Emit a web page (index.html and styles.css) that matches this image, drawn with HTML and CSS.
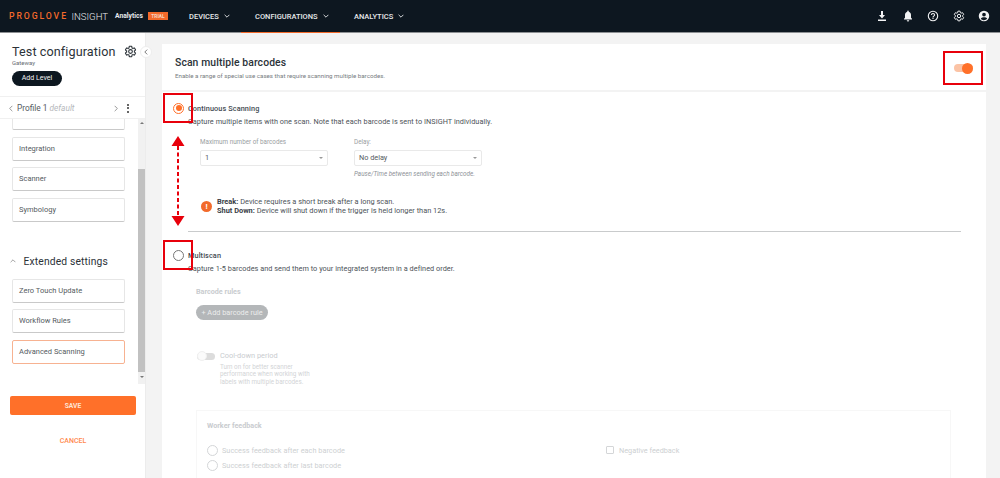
FILE: index.html
```html
<!DOCTYPE html>
<html lang="en">
<head>
<meta charset="utf-8">
<title>Scan multiple barcodes</title>
<link rel="stylesheet" href="styles.css">
</head>
<body>
<header class="topbar">
  <div class="brand"><span class="brand-pro">PROGLOVE</span><span class="brand-insight">INSIGHT</span><span class="brand-an">Analytics</span><span class="brand-trial">TRIAL</span></div>
  <nav class="nav">
    <span class="nav-item nav-devices">DEVICES <svg class="chev" viewBox="0 0 10 6"><path d="M1 1l4 4 4-4"/></svg></span>
    <span class="nav-item nav-config">CONFIGURATIONS <svg class="chev" viewBox="0 0 10 6"><path d="M1 1l4 4 4-4"/></svg></span>
    <span class="nav-item">ANALYTICS <svg class="chev" viewBox="0 0 10 6"><path d="M1 1l4 4 4-4"/></svg></span>
  </nav>
  <div class="top-icons">
    <svg class="ti" viewBox="0 0 24 24"><path d="M4 19h16v3H4zM10 2h4v8h4l-6 7-6-7h4z"/></svg>
    <svg class="ti" viewBox="0 0 24 24"><path d="M12 23a2.500 2.500 0 0 0 2.500-2.500h-5A2.500 2.500 0 0 0 12 23zm8-4v-1.500l-2-2V10c0-3.200-1.700-5.700-4.500-6.400V2.500a1.500 1.500 0 0 0-3 0v1.100C7.700 4.300 6 6.800 6 10v5.500l-2 2V19z"/></svg>
    <svg class="ti" viewBox="0 0 24 24"><path fill-rule="evenodd" d="M12 1.500a10.500 10.500 0 1 0 0 21 10.500 10.500 0 0 0 0-21zm0 18.800a8.300 8.300 0 1 1 0-16.600 8.300 8.300 0 0 1 0 16.600zM10.900 16h2.200v2.200h-2.200zM12 5.800a4.200 4.200 0 0 0-4.200 4.200H10a2 2 0 1 1 4 0c0 2-3.100 1.800-3.100 5h2.200c0-2.300 3.100-2.600 3.100-5A4.200 4.200 0 0 0 12 5.800z"/></svg>
    <svg class="ti ti-gear" viewBox="0 0 24 24"><path d="M19.140 12.940c.04-.3.06-.61.06-.94 0-.32-.02-.64-.07-.94l2.030-1.580c.18-.14.23-.41.12-.61l-1.920-3.320c-.12-.22-.37-.29-.59-.22l-2.390.96c-.5-.38-1.030-.7-1.620-.94l-.36-2.540c-.04-.24-.24-.41-.48-.41h-3.840c-.24 0-.43.17-.47.41l-.36 2.540c-.59.24-1.130.57-1.620.94l-2.390-.96c-.22-.08-.47 0-.59.22L2.740 8.870c-.12.21-.08.47.12.61l2.030 1.580c-.05.3-.09.63-.09.94s.02.64.07.94l-2.030 1.580c-.18.14-.23.41-.12.61l1.920 3.320c.12.22.37.29.59.22l2.390-.96c.5.38 1.030.7 1.620.94l.36 2.540c.05.24.24.41.48.41h3.840c.24 0 .44-.17.47-.41l.36-2.540c.59-.24 1.130-.56 1.620-.94l2.390.96c.22.08.47 0 .59-.22l1.920-3.320c.12-.22.07-.47-.12-.61z"/><circle cx="12" cy="12" r="3.400"/></svg>
    <svg class="ti" viewBox="0 0 24 24"><path fill-rule="evenodd" d="M12 1.500a10.500 10.500 0 1 0 0 21 10.500 10.500 0 0 0 0-21zm0 4a3.700 3.700 0 1 1 0 7.400 3.700 3.700 0 0 1 0-7.400zm0 15c-2.500 0-4.800-1.100-6.300-3 1-1.800 3.800-2.800 6.300-2.800s5.300 1 6.300 2.800a8.300 8.300 0 0 1-6.300 3z"/></svg>
  </div>
</header>
<div class="shell">
  <aside class="sidebar">
    <div class="side-head">
      <div class="title-row"><h1 class="cfg-title">Test configuration</h1>
        <svg class="cfg-gear" viewBox="0 0 24 24"><path d="M19.140 12.940c.04-.3.06-.61.06-.94 0-.32-.02-.64-.07-.94l2.030-1.580c.18-.14.23-.41.12-.61l-1.920-3.320c-.12-.22-.37-.29-.59-.22l-2.390.96c-.5-.38-1.030-.7-1.620-.94l-.36-2.540c-.04-.24-.24-.41-.48-.41h-3.840c-.24 0-.43.17-.47.41l-.36 2.540c-.59.24-1.130.57-1.620.94l-2.390-.96c-.22-.08-.47 0-.59.22L2.740 8.870c-.12.21-.08.47.12.61l2.030 1.580c-.05.3-.09.63-.09.94s.02.64.07.94l-2.030 1.580c-.18.14-.23.41-.12.61l1.920 3.320c.12.22.37.29.59.22l2.390-.96c.5.38 1.030.7 1.620.94l.36 2.540c.05.24.24.41.48.41h3.840c.24 0 .44-.17.47-.41l.36-2.540c.59-.24 1.130-.56 1.620-.94l2.390.96c.22.08.47 0 .59-.22l1.920-3.320c.12-.22.07-.47-.12-.61z"/><circle cx="12" cy="12" r="3.400"/></svg>
      </div>
      <div class="gateway">Gateway</div>
      <button class="add-level">Add Level</button>
    </div>
    <div class="profile-row">
      <svg class="pchev" viewBox="0 0 6 10"><path d="M5 1L1 5l4 4"/></svg>
      <span class="profile-name">Profile 1 <em>default</em></span>
      <svg class="pchev pnext" viewBox="0 0 6 10"><path d="M1 1l4 4-4 4"/></svg>
      <span class="dots"><i></i><i></i><i></i></span>
    </div>
    <div class="side-scroll">
      <div class="side-list">
        <div class="side-item side-first">Gateway</div>
        <div class="side-item">Integration</div>
        <div class="side-item">Scanner</div>
        <div class="side-item">Symbology</div>
        <div class="ext-head"><svg class="ext-chev" viewBox="0 0 10 6"><path d="M1 5l4-4 4 4"/></svg><span>Extended settings</span></div>
        <div class="side-item">Zero Touch Update</div>
        <div class="side-item">Workflow Rules</div>
        <div class="side-item side-active">Advanced Scanning</div>
      </div>
      <div class="scrollbar"><span class="sb-up"></span><span class="sb-thumb"></span><span class="sb-down"></span></div>
    </div>
    <button class="save">SAVE</button>
    <button class="cancel">CANCEL</button>
    <span class="collapse"><svg viewBox="0 0 6 10"><path d="M5 1L1 5l4 4"/></svg></span>
  </aside>
  <main class="main">
    <section class="card">
      <div class="card-head">
        <div>
          <h2 class="card-title">Scan multiple barcodes</h2>
          <p class="card-sub">Enable a range of special use cases that require scanning multiple barcodes.</p>
        </div>
        <span class="toggle"><i></i></span>
      </div>
      <div class="opt opt-cont">
        <div class="opt-row"><span class="radio radio-on"><i></i></span><span class="opt-title">Continuous Scanning</span></div>
        <p class="opt-desc">Capture multiple items with one scan. Note that each barcode is sent to INSIGHT individually.</p>
        <div class="fields">
          <div class="field"><label>Maximum number of barcodes</label><div class="select">1<b></b></div></div>
          <div class="field"><label>Delay:</label><div class="select">No delay<b></b></div><small>Pause/Time between sending each barcode.</small></div>
        </div>
        <div class="note">
          <span class="warn">!</span>
          <p><strong>Break:</strong> Device requires a short break after a long scan.<br><strong>Shut Down:</strong> Device will shut down if the trigger is held longer than 12s.</p>
        </div>
      </div>
      <div class="opt opt-multi">
        <div class="opt-row"><span class="radio"></span><span class="opt-title">Multiscan</span></div>
        <p class="opt-desc">Capture 1-5 barcodes and send them to your integrated system in a defined order.</p>
        <div class="disabled">
          <h3 class="dis-head dis-rules">Barcode rules</h3>
          <button class="add-rule">+ Add barcode rule</button>
          <div class="cool">
            <span class="cool-toggle"><i></i></span>
            <div><div class="cool-title">Cool-down period</div><p class="cool-text">Turn on for better scanner performance when working with labels with multiple barcodes.</p></div>
          </div>
          <div class="worker">
            <h3 class="dis-head">Worker feedback</h3>
            <div class="worker-grid">
              <div>
                <div class="fb"><span class="fb-radio"></span>Success feedback after each barcode</div>
                <div class="fb"><span class="fb-radio"></span>Success feedback after last barcode</div>
              </div>
              <div class="fb fb-neg"><span class="fb-check"></span>Negative feedback</div>
            </div>
          </div>
        </div>
      </div>
    </section>
  </main>
</div>
<span class="mark mark-toggle"></span>
<span class="mark mark-r1"></span>
<span class="mark mark-r2"></span>
<svg class="arrow" viewBox="0 0 14 90"><path class="arrow-tip" d="M7 0l6.500 10H.5zM7 90L.5 80h13z"/><path class="arrow-line" d="M7 10v70"/></svg>
</body>
</html>
```

FILE: styles.css
```css
* { box-sizing: border-box; }
html, body { margin: 0; height: 478px; overflow: hidden; }
body { font-family: Roboto, "Liberation Sans", sans-serif; color: #444b52; background: #f3f3f3; position: relative; }
button { font-family: inherit; border: 0; padding: 0; }
h1, h2, h3, p { margin: 0; font-weight: 400; }

.topbar { height: 33px; background: #0d1720; color: #e6e8ea; display: flex; align-items: center; padding: 0 10px 0 9px; border-bottom: 1px solid #8d9093; position: relative; }
.brand { display: flex; align-items: center; width: 180px; white-space: nowrap; }
.brand-pro { color: #f26a2b; font-size: 8.7px; font-weight: 500; letter-spacing: 1.9px; }
.brand-insight { font-size: 9.6px; font-weight: 300; margin-left: 3.5px; color: #e8eaec; }
.brand-an { font-size: 6.7px; font-weight: 700; margin-left: 7px; color: #e8eaec; }
.brand-trial { background: #f26a2b; color: #f5d5c4; font-size: 4.8px; font-weight: 700; padding: 1.5px 3px; margin-left: 5.5px; line-height: 5px; }
.nav { display: flex; font-size: 7.5px; font-weight: 500; white-space: nowrap; }
.nav-item { display: inline-flex; align-items: center; gap: 5px; }
.nav-devices { width: 66px; }
.nav-config { width: 99px; position: relative; }
.nav-config::after { content: ""; position: absolute; left: -14px; width: 99px; top: 20px; height: 1px; background: #f26a2b; }
.chev { width: 6px; height: 4px; fill: none; stroke: #e6e8ea; stroke-width: 1.5; }
.top-icons { margin-left: auto; display: flex; align-items: center; gap: 13.5px; }
.ti { width: 12px; height: 12px; fill: #f2f3f4; }
.ti-gear { fill: none; stroke: #f2f3f4; stroke-width: 2; }

.shell { display: flex; height: 445px; }
.sidebar { width: 146px; background: #fff; position: relative; flex: none; border-right: 1px solid #ececec; }
.side-head { padding: 10px 0 0 12px; height: 64px; border-bottom: 1px solid #f0f0f0; }
.title-row { display: flex; align-items: center; height: 16px; }
.cfg-title { font-size: 12.6px; font-weight: 400; color: #2b3238; white-space: nowrap; letter-spacing: .1px; }
.cfg-gear { width: 13px; height: 13px; margin-left: 8px; fill: none; stroke: #2b3238; stroke-width: 2; flex: none; }
.gateway { font-size: 6px; color: #666c72; line-height: 8px; }
.add-level { display: block; width: 50px; height: 15px; border-radius: 8px; background: #0d1720; color: #f2f3f4; font-size: 7px; margin-top: 3.5px; }
.profile-row { height: 22px; display: flex; align-items: center; padding: 1px 0 0 9px; font-size: 8.3px; color: #555b61; border-bottom: 1px solid #f0f0f0; }
.pchev { width: 4px; height: 7px; fill: none; stroke: #666; stroke-width: 1; }
.profile-name { margin-left: 4px; width: 97px; white-space: nowrap; }
.profile-name em { color: #b5b8bb; }
.pnext { flex: none; }
.dots { display: flex; flex-direction: column; gap: 1.5px; margin-left: 9px; }
.dots i { width: 2px; height: 2px; background: #333; border-radius: 50%; }
.side-scroll { display: flex; height: 266px; overflow: hidden; }
.side-list { flex: 1; padding: 0 13px 0 12px; }
.side-item { height: 24px; margin-bottom: 6.7px; background: #fff; border: 1px solid #e6e6e6; border-bottom: 1.5px solid #c9c9c9; border-radius: 2px; padding-left: 6px; font-size: 7.5px; line-height: 21.5px; color: #555b61; white-space: nowrap; }
.side-first { margin-top: -13px; line-height: 16px; }
.side-active { border-color: #f7b291; }
.ext-head { display: flex; align-items: center; height: 14px; margin: 32px 0 10.5px -2px; font-size: 10.3px; color: #2b3238; white-space: nowrap; letter-spacing: .15px; }
.ext-chev { width: 6px; height: 4px; fill: none; stroke: #666; stroke-width: 1; margin-right: 7.5px; }
.scrollbar { width: 8px; margin-right: -1px; display: flex; flex-direction: column; background: #f1f1f1; height: 265px; flex: none; }
.sb-up { height: 50px; position: relative; }
.sb-thumb { height: 203px; background: #c1c1c1; }
.sb-down { flex: 1; position: relative; }
.sb-up::after, .sb-down::after { content: ""; position: absolute; left: 2px; border: 2px solid transparent; }
.sb-up::after { top: 3px; border-bottom-color: #777; border-top: 0; }
.sb-down::after { top: 4px; border-top-color: #777; border-bottom: 0; }
.save { display: block; width: 126px; height: 19px; margin: 11px 0 0 10px; background: #ff7029; color: #fde3d6; border-radius: 2px; font-size: 6.7px; font-weight: 700; }
.cancel { display: block; width: 126px; margin: 21px 0 0 10px; background: none; color: #ff8a50; font-size: 7px; font-weight: 500; height: 10px; }
.collapse { position: absolute; top: 13px; left: 140px; width: 12px; height: 12px; border-radius: 50%; background: #fff; border: 1px solid #eee; display: flex; align-items: center; justify-content: center; }
.collapse svg { width: 4px; height: 6px; fill: none; stroke: #555; stroke-width: 1.3; }

.main { flex: 1; padding: 11px 14px 0 16px; overflow: hidden; }
.card { background: #fff; height: 500px; }
.card-head { height: 48px; border-bottom: 2px solid #f3f3f3; padding: 12px 13px 0 13px; display: flex; justify-content: space-between; }
.card-title { font-size: 10.4px; font-weight: 500; color: #2b3238; line-height: 13px; letter-spacing: .1px; }
.card-sub { font-size: 6.2px; color: #777c81; margin-top: 3px; line-height: 8px; }
.toggle { display: block; width: 19px; height: 8px; border-radius: 4px; background: #fbc3a5; position: relative; margin-top: 8px; }
.toggle i { position: absolute; right: 0; top: -1.5px; width: 11px; height: 11px; border-radius: 50%; background: #ff7029; }

.opt-row { display: flex; align-items: center; height: 12px; white-space: nowrap; margin-left: -15px; }
.opt-cont { margin: 10px 25px 0 26px; height: 130px; border-bottom: 1px solid #c9cbcc; }
.opt-multi { margin: 17px 0 0 26px; }
.radio { width: 11px; height: 11px; border-radius: 50%; border: 1px solid #777; background: #fff; margin-right: 4px; display: flex; align-items: center; justify-content: center; flex: none; }
.radio-on { border-color: #ff7029; }
.radio-on i { width: 6px; height: 6px; border-radius: 50%; background: #ff7029; }
.opt-title { font-size: 7.3px; font-weight: 500; color: #444b52; white-space: nowrap; letter-spacing: .1px; }
.opt-desc { font-size: 7.3px; color: #4d5359; margin-top: 3px; line-height: 10px; white-space: nowrap; letter-spacing: .04px; }
.fields { display: flex; margin: 11px 0 0 12px; gap: 26px; height: 51px; }
.field { width: 128px; }
.field label { display: block; font-size: 6.3px; color: #9a9ea2; line-height: 8px; margin-bottom: 4px; white-space: nowrap; }
.select { height: 16px; border: 1px solid #e9e9e9; border-radius: 2px; font-size: 7.3px; line-height: 14px; padding-left: 4px; position: relative; color: #555b61; }
.select b { position: absolute; right: 4px; top: 6px; border: 2.5px solid transparent; border-top-color: #999; border-bottom: 0; }
.field small { display: block; font-size: 6.3px; font-style: italic; color: #8e9297; margin-top: 4px; line-height: 8px; white-space: nowrap; }
.note { display: flex; align-items: center; margin: 8px 0 0 13px; gap: 5px; }
.note p { font-size: 7.4px; line-height: 9px; color: #4d5359; white-space: nowrap; }
.note strong { font-weight: 700; color: #3a4046; }
.warn { width: 11px; height: 11px; border-radius: 50%; background: #f26a2b; color: #fff; font-size: 8px; font-weight: 700; text-align: center; line-height: 11px; flex: none; }

.disabled { margin-left: 8px; }
.dis-head { font-size: 7.2px; font-weight: 700; color: #c9cccf; line-height: 9px; white-space: nowrap; }
.dis-rules { margin-top: 12.5px; }
.add-rule { display: block; width: 72px; height: 15px; border-radius: 8px; background: #b4b7b9; color: #eceded; font-size: 7.3px; margin-top: 9.5px; white-space: nowrap; }
.cool { display: flex; margin-top: 30.5px; }
.cool-toggle { display: block; width: 18px; height: 7px; border-radius: 4px; background: #dcdcdc; position: relative; margin: 2px 5px 0 1px; flex: none; }
.cool-toggle i { position: absolute; left: 0; top: -1.5px; width: 10px; height: 10px; border-radius: 50%; background: #fbfbfb; border: 1px solid #f0f0f0; }
.cool-title { font-size: 7.4px; color: #c9cccf; line-height: 10px; white-space: nowrap; }
.cool-text { font-size: 6.3px; line-height: 7.5px; color: #d2d4d6; width: 96px; margin-top: 3px; }
.worker { margin-top: 24px; margin-right: 35px; height: 80px; border: 1px solid #f7f7f7; padding: 9.5px 0 0 10px; }
.worker-grid { display: flex; margin-top: 12.7px; }
.worker-grid > div:first-child { width: 399px; }
.fb { display: flex; align-items: center; font-size: 7.3px; color: #cdd0d2; height: 15.7px; white-space: nowrap; letter-spacing: .03px; }
.fb-radio { width: 11px; height: 11px; border-radius: 50%; border: 1px solid #d4d6d8; margin-right: 4px; flex: none; }
.fb-neg { align-self: flex-start; letter-spacing: 0; }
.fb-check { width: 8px; height: 8px; border: 1px solid #d4d6d8; border-radius: 1px; margin-right: 5px; flex: none; }

.mark { position: absolute; border: 2px solid #e8000b; }
.mark-toggle { left: 943px; top: 51px; width: 40px; height: 34px; }
.mark-r1 { left: 163px; top: 93px; width: 30px; height: 30px; }
.mark-r2 { left: 163px; top: 240px; width: 30px; height: 30px; }
.arrow { position: absolute; left: 171px; top: 136px; width: 14px; height: 90px; }
.arrow-tip { fill: #e8000b; }
.arrow-line { stroke: #e8000b; stroke-width: 2; stroke-dasharray: 4 2.5; fill: none; }
```
